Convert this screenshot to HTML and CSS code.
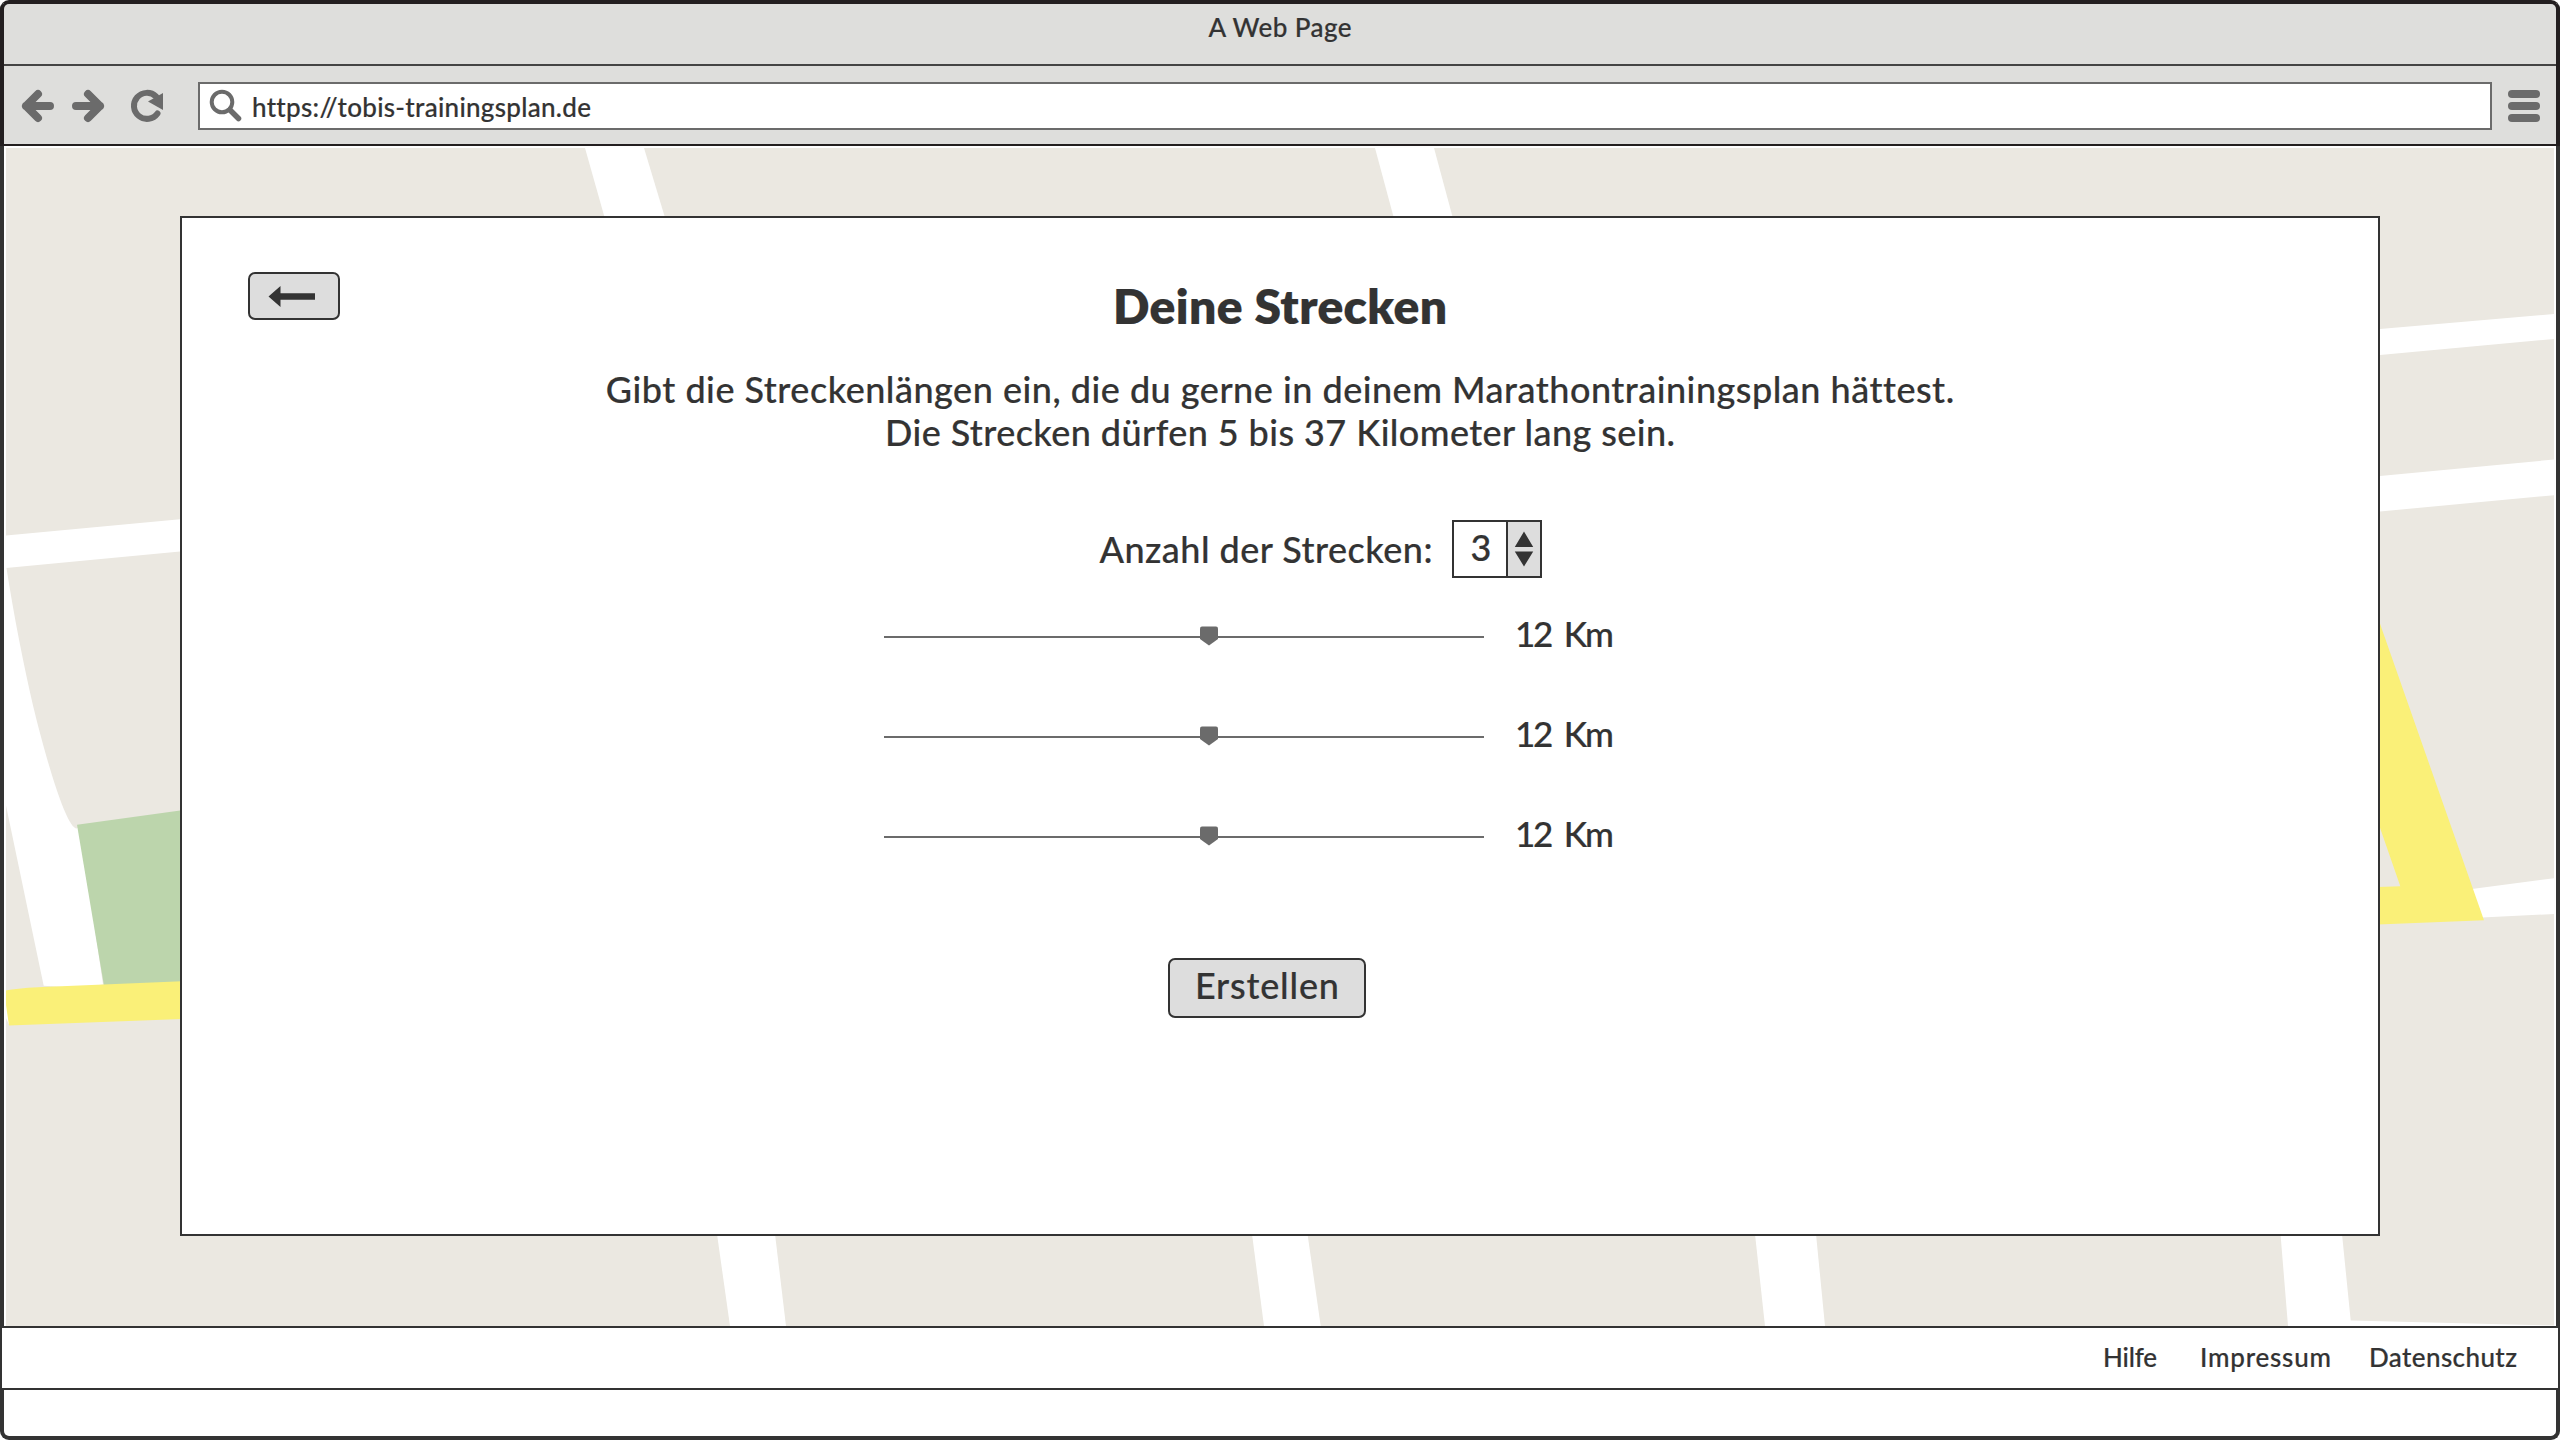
FILE: index.html
```html
<!DOCTYPE html>
<html lang="de">
<head>
<meta charset="utf-8">
<title>A Web Page</title>
<link rel="stylesheet" href="styles.css">
</head>
<body>
<div class="window">
  <header class="titlebar"><span class="fit" data-w="143">A Web Page</span></header>
  <nav class="toolbar">
    <svg class="nav-icons" width="172" height="76" viewBox="4 68 172 76" fill="none" stroke="#6b6b6b" stroke-linecap="round" stroke-linejoin="round">
      <path d="M38 94 26 106l12 12M26 106h24" stroke-width="8"/>
      <path d="M88 94l12 12-12 12M100 106H76" stroke-width="8"/>
      <path d="M157.500 113.500A13 13 0 1 1 156 96.500" stroke-width="6"/>
      <path d="M163 93v17l-15-8.500z" fill="#6b6b6b" stroke="none"/>
    </svg>
    <div class="address">
      <svg width="34" height="34" viewBox="0 0 34 34" fill="none" stroke="#6b6b6b"><circle cx="13" cy="13" r="10.300" stroke-width="4"/><path d="M21 21l8.500 8.500" stroke-width="5.500" stroke-linecap="round"/></svg>
      <span class="fit" data-w="338">https://tobis-trainingsplan.de</span>
    </div>
    <div class="menu"><i></i><i></i><i></i></div>
  </nav>
  <main class="page">
    <svg class="map" viewBox="6 148 2548 1178" width="2548" height="1178">
      <path fill="#ebe8e1" d="M6 148h2548v1178H6z"/>
      <g fill="#fff">
        <path d="M585 148h59l23.500 78H607z"/>
        <path d="M1375 148h59l21 78h-59z"/>
        <path d="M6 535.500l174-16.300v32.200L6 568z"/>
        <path d="M6 565C14 617 24 666 33 705.600C45 755 66 829 77 828.500L80 826l23 158.500L80 988l-36.300-2.300L6 805.500z"/>
        <path d="M6 1000l3.500 25.500L6 1018z"/>
        <path d="M2380 329.100l174-15.100v25l-174 16z"/>
        <path d="M2380 476l174-16.500v35.700l-174 16.300z"/>
        <path d="M2470 889.300l84-11.100V914l-72 3.500z"/>
        <path d="M717 1234h58l11 92h-56z"/>
        <path d="M1252 1234h55.500l13.200 92H1264z"/>
        <path d="M1755 1234h61l9 92h-60z"/>
        <path d="M2280.500 1234h61.500l8.700 86.600L2554 1325.500v.5h-266z"/>
      </g>
      <path fill="#bcd5ac" d="M77 824.700l105-14.400V982l-78 4z"/>
      <path fill="#faf078" d="M6 990.500c10-2 24-3 37-3.500l139-5.800V1019L9 1025.600 6 1005z"/>
      <path fill="#faf078" d="M2378 618l106 302.200-106 4.400V887l22.300-.7L2378 822z"/>
    </svg>
    <section class="card">
      <button class="back" aria-label="Zurück"><svg width="88" height="44" viewBox="0 0 88 44"><path fill="#333" d="M18.500 22.500 30.500 12v7.200H65v6.600H30.500V33z"/></svg></button>
      <h1><span class="fit" data-w="334">Deine Strecken</span></h1>
      <p><span class="fit" data-w="1347">Gibt die Streckenlängen ein, die du gerne in deinem Marathontrainingsplan hättest.</span></p>
      <p><span class="fit" data-w="790">Die Strecken dürfen 5 bis 37 Kilometer lang sein.</span></p>
      <div class="count">
        <label><span class="fit" data-w="333">Anzahl der Strecken:</span></label>
        <div class="stepper"><b>3</b><svg width="33" height="54" viewBox="0 0 33 54"><path fill="#333" d="M16.500 9 26 25H7zM16.500 45 26 29.500H7z"/></svg></div>
      </div>
      <div class="sliders">
        <div class="slider"><svg width="600" height="20" viewBox="0 0 600 20"><path fill="#6b6b6b" d="M0 10h600v2H0z"/><path fill="#6b6b6b" d="M318 .5h14q2 0 2 2V13l-9 6.500-9-6.500V2.500q0-2 2-2z"/></svg><span class="fit" data-w="99">12 Km</span></div>
        <div class="slider"><svg width="600" height="20" viewBox="0 0 600 20"><path fill="#6b6b6b" d="M0 10h600v2H0z"/><path fill="#6b6b6b" d="M318 .5h14q2 0 2 2V13l-9 6.500-9-6.500V2.500q0-2 2-2z"/></svg><span class="fit" data-w="99">12 Km</span></div>
        <div class="slider"><svg width="600" height="20" viewBox="0 0 600 20"><path fill="#6b6b6b" d="M0 10h600v2H0z"/><path fill="#6b6b6b" d="M318 .5h14q2 0 2 2V13l-9 6.500-9-6.500V2.500q0-2 2-2z"/></svg><span class="fit" data-w="99">12 Km</span></div>
      </div>
      <button class="create"><span class="fit" data-w="144">Erstellen</span></button>
    </section>
  </main>
  <footer class="links"><a><span class="fit" data-w="54">Hilfe</span></a><a><span class="fit" data-w="131">Impressum</span></a><a><span class="fit" data-w="148">Datenschutz</span></a></footer>
</div>
<script src="fit.js"></script>
</body>
</html>
```
FILE: fit.js
```js
// Spread each label to its design width through letter spacing.
document.querySelectorAll('.fit').forEach(function (el) {
  var w = el.getBoundingClientRect().width;
  var n = el.textContent.length;
  var s = (Number(el.dataset.w) - w) / (n - 1);
  el.style.letterSpacing = s.toFixed(3) + 'px';
  el.style.marginRight = (-s).toFixed(3) + 'px';
});
```
FILE: styles.css
```css
* { box-sizing: border-box; }
body { margin: 0; background: #fff; color: #333; font-family: Lato, "Open Sans", sans-serif; font-weight: 500; -webkit-text-stroke: 0.2px #333; }
.window { width: 2560px; height: 1440px; border: 4px solid #333; border-radius: 9px; display: flex; flex-direction: column; background: #fff; border-top-color: #231f20; }
.fit { display: inline-block; white-space: pre; }
.titlebar { height: 62px; background: #dededc; border-bottom: 2px solid #444; border-radius: 5px 5px 0 0; text-align: center; font-size: 26px; line-height: 47px; box-shadow: -4px 0 #231f20, 4px 0 #231f20; }
.toolbar { height: 80px; padding-top: 2px; background: #dededc; border-bottom: 2px solid #231f20; display: flex; align-items: center; box-shadow: -4px 0 #231f20, 4px 0 #231f20; }
.nav-icons { width: 172px; flex: none; }
.address { margin-left: 22px; width: 2294px; height: 48px; border: 2px solid #6b6b6b; background: #fff; display: flex; align-items: center; padding-left: 9px; font-size: 26px; }
.address span { margin-left: 9px; padding-top: 2px; }
.address svg { flex: none; }
.menu { margin-left: 16px; width: 32px; display: grid; gap: 4px; }
.menu i { height: 8px; border-radius: 4px; background: #6b6b6b; }
.page { height: 1180px; display: grid; padding: 2px 2px 0; }
.map { grid-area: 1 / 1; display: block; }
.card { grid-area: 1 / 1; position: relative; margin: 68px 0 0 174px; width: 2200px; height: 1020px; border: 2px solid #333; background: #fff; display: flex; flex-direction: column; align-items: center; padding-top: 56px; }
.back { position: absolute; left: 66px; top: 54px; width: 92px; height: 48px; padding: 0; border: 2px solid #333; border-radius: 7px; background: #ddd; display: block; }
.back svg { display: block; }
h1 { margin: 0 0 30px; font-size: 48px; line-height: 64px; font-weight: 800; }
p { margin: 0; font-size: 36px; line-height: 43px; }
.count { margin-top: 66px; display: flex; align-items: center; gap: 19px; font-size: 36px; padding-left: 81px; }
.stepper { width: 90px; height: 58px; border: 2px solid #333; display: flex; }
.stepper b { width: 52px; padding-left: 3px; font-weight: 500; text-align: center; line-height: 51px; }
.stepper svg { border-left: 2px solid #333; background: #ddd; width: 34px; flex: none; }
.sliders { width: 730px; margin-left: -62px; margin-top: 8px; }
.slider { height: 100px; display: flex; align-items: center; gap: 31px; font-size: 35px; }
.slider svg { flex: none; }
.slider span { word-spacing: 6px; padding-bottom: 7px; }
.create { width: 198px; height: 60px; margin: 72px 26px 0 0; border: 2px solid #333; border-radius: 7px; background: #ddd; color: #333; font: 500 36px Lato, sans-serif; padding: 0 0 7px; -webkit-text-stroke: 0.2px #333; }
.links { height: 64px; margin: 0 -4px; border: 2px solid #333; background: #fff; display: flex; justify-content: flex-end; align-items: center; gap: 38px; padding: 0 41px 2px 0; font-size: 26px; position: relative; }
.links a:first-child { margin-right: 5px; }
```
